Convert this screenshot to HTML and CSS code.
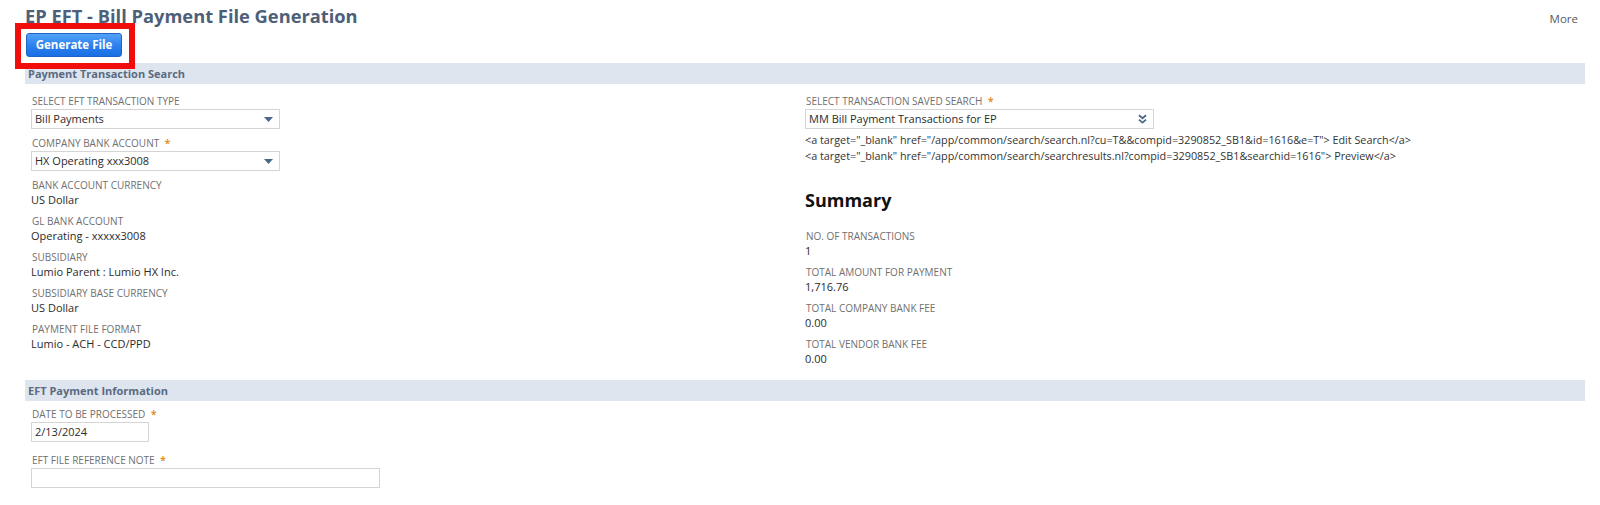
FILE: index.html
```html
<!DOCTYPE html>
<html lang="en">
<head>
<meta charset="utf-8">
<title>EP EFT - Bill Payment File Generation</title>
<link rel="stylesheet" href="styles.css">
</head>
<body>
<div class="page">
  <header class="page-head">
    <h1 class="page-title">EP EFT - Bill Payment File Generation</h1>
    <a class="more-link">More</a>
  </header>

  <div class="actions">
    <span class="btn-wrap">
      <button class="btn-primary" type="button">Generate File</button>
      <span class="highlight"></span>
    </span>
  </div>

  <section class="section">
    <div class="section-bar">Payment Transaction Search</div>
    <div class="section-body cols">
      <div class="col col-left">
        <div class="field field-input">
          <div class="label">SELECT EFT TRANSACTION TYPE</div>
          <div class="select w-left">
            <span class="select-text">Bill Payments</span>
            <svg class="caret" width="9" height="5" viewBox="0 0 9 5"><polygon points="0,0 9,0 4.5,5"/></svg>
          </div>
        </div>
        <div class="field field-input">
          <div class="label">COMPANY BANK ACCOUNT <span class="req">*</span></div>
          <div class="select w-left">
            <span class="select-text">HX Operating xxx3008</span>
            <svg class="caret" width="9" height="5" viewBox="0 0 9 5"><polygon points="0,0 9,0 4.5,5"/></svg>
          </div>
        </div>
        <div class="field">
          <div class="label">BANK ACCOUNT CURRENCY</div>
          <div class="value">US Dollar</div>
        </div>
        <div class="field">
          <div class="label">GL BANK ACCOUNT</div>
          <div class="value">Operating - xxxxx3008</div>
        </div>
        <div class="field">
          <div class="label">SUBSIDIARY</div>
          <div class="value">Lumio Parent : Lumio HX Inc.</div>
        </div>
        <div class="field">
          <div class="label">SUBSIDIARY BASE CURRENCY</div>
          <div class="value">US Dollar</div>
        </div>
        <div class="field">
          <div class="label">PAYMENT FILE FORMAT</div>
          <div class="value">Lumio - ACH - CCD/PPD</div>
        </div>
      </div>

      <div class="col col-right">
        <div class="field field-search">
          <div class="label">SELECT TRANSACTION SAVED SEARCH <span class="req">*</span></div>
          <div class="select w-right">
            <span class="select-text">MM Bill Payment Transactions for EP</span>
            <svg class="chevrons" width="9" height="10" viewBox="0 0 9 10"><path d="M1 1.2 L4.5 4.2 L8 1.2 M1 5.6 L4.5 8.6 L8 5.6"/></svg>
          </div>
          <div class="raw-links">
            <div>&lt;a target="_blank" href="/app/common/search/search.nl?cu=T&amp;&amp;compid=3290852_SB1&amp;id=1616&amp;e=T"&gt; Edit Search&lt;/a&gt;</div>
            <div>&lt;a target="_blank" href="/app/common/search/searchresults.nl?compid=3290852_SB1&amp;searchid=1616"&gt; Preview&lt;/a&gt;</div>
          </div>
        </div>

        <h2 class="summary-title">Summary</h2>
        <div class="field">
          <div class="label">NO. OF TRANSACTIONS</div>
          <div class="value">1</div>
        </div>
        <div class="field">
          <div class="label">TOTAL AMOUNT FOR PAYMENT</div>
          <div class="value">1,716.76</div>
        </div>
        <div class="field">
          <div class="label">TOTAL COMPANY BANK FEE</div>
          <div class="value">0.00</div>
        </div>
        <div class="field">
          <div class="label">TOTAL VENDOR BANK FEE</div>
          <div class="value">0.00</div>
        </div>
      </div>
    </div>
  </section>

  <section class="section">
    <div class="section-bar">EFT Payment Information</div>
    <div class="section-body body-eft">
      <div class="field field-date">
        <div class="label">DATE TO BE PROCESSED <span class="req">*</span></div>
        <div class="textbox w-date">2/13/2024</div>
      </div>
      <div class="field field-input">
        <div class="label">EFT FILE REFERENCE NOTE <span class="req">*</span></div>
        <div class="textbox w-note"></div>
      </div>
    </div>
  </section>
</div>
</body>
</html>
```

FILE: styles.css
```css
* {
  box-sizing: border-box;
}

html, body {
  margin: 0;
  padding: 0;
  background: #ffffff;
}

body {
  font-family: "Open Sans", "Liberation Sans", sans-serif;
  color: #2b2b2b;
}

.page {
  padding: 4px 15px 0 25px;
}

/* Title row */
.page-head {
  display: flex;
  align-items: baseline;
  justify-content: space-between;
}

.page-title {
  margin: 0;
  font-size: 18.3px;
  line-height: 24px;
  font-weight: 700;
  color: #4d5f79;
}

.more-link {
  font-size: 11.5px;
  color: #555b63;
  margin-right: 7px;
}

/* Button row */
.actions {
  margin-top: 5px;
  height: 24px;
  display: flex;
}

.btn-wrap {
  position: relative;
  display: inline-block;
  margin-left: 1px;
}

.btn-primary {
  display: block;
  width: 96px;
  height: 24px;
  padding: 0;
  border: 1px solid #1d63c9;
  border-radius: 3px;
  background: linear-gradient(#53a2f7, #2b80ee 55%, #1a6fe3);
  color: #ffffff;
  font-family: "Open Sans", "Liberation Sans", sans-serif;
  font-size: 11.5px;
  font-weight: 700;
  line-height: 22px;
  text-align: center;
}

/* Red call-out drawn over the button */
.highlight {
  position: absolute;
  top: -10px;
  left: -11px;
  right: -13px;
  bottom: -12px;
  border: 6px solid #f20d0d;
  pointer-events: none;
}

/* Sections */
.section {
  margin-top: 6px;
}

.section + .section {
  margin-top: 7px;
}

.section-bar {
  height: 21px;
  line-height: 21px;
  padding-left: 3px;
  background: #dfe5ee;
  color: #5a6a81;
  font-size: 11px;
  font-weight: 700;
}

.section-body {
  padding-top: 10px;
}

.cols {
  display: grid;
  grid-template-columns: 780px 1fr;
}

.col-left {
  padding-left: 6px;
}

.body-eft {
  padding-left: 6px;
  padding-top: 6px;
}

/* Fields */
.field {
  margin-bottom: 6px;
}

.field-input {
  margin-bottom: 7px;
}

.field-date {
  margin-bottom: 11px;
}

.label {
  font-size: 10px;
  line-height: 14px;
  color: #707070;
  padding-left: 1px;
  white-space: nowrap;
}

.req {
  color: #e0922e;
  font-weight: 700;
  margin-left: 3px;
}

.value {
  font-size: 11px;
  line-height: 16px;
  color: #2b2b2b;
}

.select,
.textbox {
  margin-top: 1px;
  height: 20px;
  border: 1px solid #d5d5d5;
  background: #ffffff;
  font-size: 11px;
  line-height: 18px;
  color: #2b2b2b;
  padding-left: 3px;
}

.select {
  display: flex;
  align-items: center;
  justify-content: space-between;
  padding-right: 6px;
}

.select-text {
  line-height: 18px;
}

.caret {
  fill: #4b6787;
  flex: none;
}

.chevrons {
  flex: none;
  fill: none;
  stroke: #4b6787;
  stroke-width: 1.8;
}

.w-left {
  width: 249px;
}

.w-right {
  width: 349px;
}

.w-date {
  width: 118px;
}

.w-note {
  width: 349px;
}

/* Saved-search raw markup lines */
.raw-links {
  margin-top: 3px;
  font-size: 10.8px;
  line-height: 16px;
  color: #333333;
  white-space: nowrap;
}

.field-search {
  margin-bottom: 0;
}

.summary-title {
  margin: 24px 0 17px;
  font-size: 18px;
  line-height: 24px;
  font-weight: 700;
  color: #111111;
}
```
